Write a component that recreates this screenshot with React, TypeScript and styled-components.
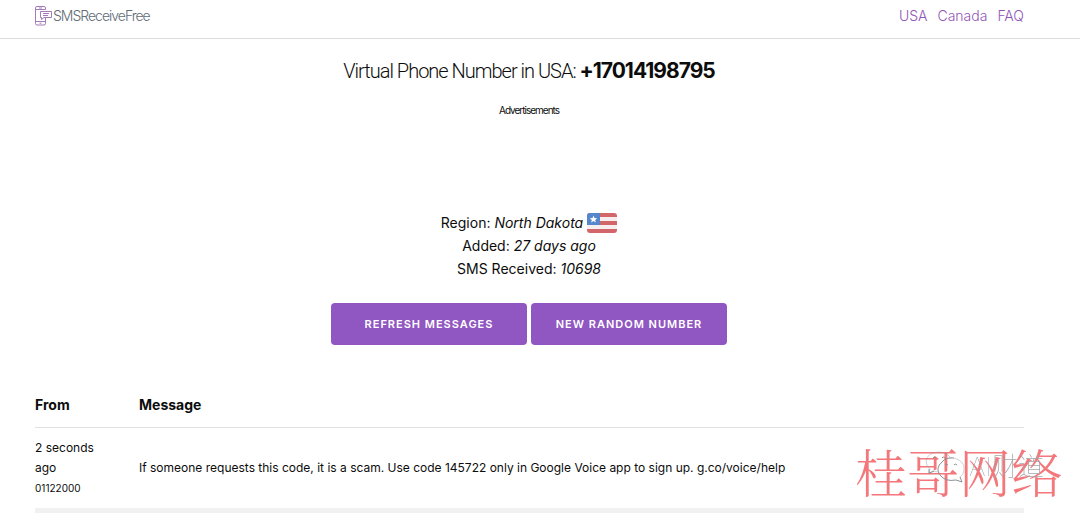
import React from "react";
import styled, { createGlobalStyle } from "styled-components";

const GlobalStyle = createGlobalStyle`
  * { box-sizing: border-box; }
  body {
    margin: 0;
    background: #fff;
    color: #0c0c0c;
    font-family: Inter, "Liberation Sans", sans-serif;
    font-size: 14px;
    font-weight: 400;
    overflow: hidden;
  }
`;

const Header = styled.header`
  display: flex;
  justify-content: space-between;
  align-items: center;
  padding: 4px 56px 11px 35px;
  border-bottom: 1px solid #dcdcdc;
  line-height: 23px;
`;

const Brand = styled.a`
  display: flex;
  align-items: center;
  color: #606c76;
  font-size: 14px;
  font-weight: 300;
  letter-spacing: -1px;
  text-decoration: none;
`;

const Nav = styled.nav`
  display: flex;
  gap: 10px;
`;

const NavLink = styled.a`
  color: #9056b8;
  font-size: 14px;
  font-weight: 300;
  text-decoration: none;
`;

const Main = styled.main`
  padding: 18px 56px 0 35px;
`;

const Summary = styled.section`
  display: flex;
  flex-direction: column;
  align-items: center;
  padding-right: 1px;
  text-align: center;
`;

const Title = styled.h1`
  margin: 0;
  font-family: Roboto, Inter, sans-serif;
  font-size: 20px;
  line-height: 28px;
  font-weight: 300;
  letter-spacing: -1px;
`;

const Strong = styled.strong`
  font-family: Inter, sans-serif;
  font-size: 21px;
  font-weight: 700;
`;

const AdSlot = styled.div`
  height: 126px;
  padding-top: 17px;
  font-size: 10px;
  line-height: 16px;
  letter-spacing: -1px;
`;

const Facts = styled.div`
  font-size: 14px;
  line-height: 23px;
`;

const Fact = styled.div`
  display: flex;
  justify-content: center;
  align-items: center;
  gap: 4px;
`;

const Actions = styled.div`
  display: flex;
  gap: 4px;
  margin-top: 23px;
`;

const Button = styled.button`
  width: 196px;
  height: 42px;
  padding: 0;
  border: 0;
  border-radius: 4px;
  background: #9056c2;
  color: #fff;
  font-family: inherit;
  font-size: 11px;
  font-weight: 600;
  letter-spacing: 1px;
  text-transform: uppercase;
`;

const Table = styled.table`
  width: 100%;
  margin-top: 36px;
  border-collapse: collapse;
  text-align: left;
`;

const HeadCell = styled.th`
  padding: 12px 0 11px;
  border-bottom: 1px solid #e1e1e1;
  font-size: 14px;
  font-weight: 700;
  line-height: 23px;
`;

const FromHead = styled(HeadCell)`
  width: 104px;
`;

const Cell = styled.td`
  padding: 10px 0;
  border-bottom: 6px solid #f1f1f1;
  font-size: 12px;
  line-height: 20px;
  vertical-align: middle;
`;

const FromCell = styled(Cell)`
  padding-right: 36px;
`;

const Sender = styled.div`
  font-size: 10px;
`;

const SiteMark = styled.div`
  position: fixed;
  right: 17px;
  bottom: 6px;
  color: #f3777b;
  font-family: "Noto Serif CJK SC", "Noto Sans CJK SC", serif;
  font-size: 52px;
  font-weight: 300;
  line-height: 72px;
`;

const AccountMark = styled.div`
  position: fixed;
  right: 36px;
  bottom: 28px;
  display: flex;
  align-items: center;
  gap: 4px;
  color: #a3a7ab;
  font-family: Inter, "Noto Sans CJK SC", sans-serif;
  font-size: 26px;
  font-weight: 100;
  line-height: 36px;
`;

function LogoIcon() {
  return (
    <svg width="18" height="20" viewBox="0 0 18 20" fill="none" stroke="#a27bb8" aria-hidden="true">
      <path d="M10.5 3.5V2Q10.5.5 9 .5H2Q.5.5.5 2v15.500Q.5 19 2 19h7q1.500 0 1.500-1.500V12M.5 3.500h10M.5 15.500h10M4 2h3M4.500 17.200h2" />
      <path d="M5.500 5.500h11v6H9l-2.500 2v-2h-1zM8 7.500h6M8 9.500h5" />
    </svg>
  );
}

function Flag() {
  return (
    <svg width="30" height="20" viewBox="0 0 30 20" role="img" aria-label="USA">
      <clipPath id="flag-shape"><rect width="30" height="20" rx="3" /></clipPath>
      <g clipPath="url(#flag-shape)">
        <path fill="#d3666b" d="M0 0h30v20H0z" />
        <path fill="#f6edf0" d="M0 4h30v4H0zM0 12h30v4H0z" />
        <path fill="#5686cc" d="M0 0h13v12H0z" />
        <path fill="#fff" d="m6.500 2.500 1 2.500 2.700.2-2 1.700.6 2.600-2.300-1.400-2.300 1.400.6-2.600-2-1.700 2.700-.2z" />
      </g>
    </svg>
  );
}

function ChatIcon() {
  return (
    <svg width="40" height="34" viewBox="0 0 40 34" fill="none" stroke="#8b8f93" aria-hidden="true">
      <path strokeOpacity=".4" d="M14 22q-3 0-5-1l-5 3 1-5Q1 16 1 11 2 3 13 2q10 0 13 7" />
      <path d="M35 27l2 5-6-2Q20 32 15 25T17 12q4-5 12-4M20 15q1-2 3 0M29 15q1-2 3 0M8 8q1-2 3 0M17 8q1-2 3 0M4 19v4l5-2" />
      <path strokeOpacity=".4" d="M29 8q11 3 10 12 0 4-4 7" />
    </svg>
  );
}

export default function App() {
  return (
    <>
      <GlobalStyle />
      <Header>
        <Brand href="#"><LogoIcon />SMSReceiveFree</Brand>
        <Nav>
          <NavLink href="#usa">USA</NavLink>
          <NavLink href="#canada">Canada</NavLink>
          <NavLink href="#faq">FAQ</NavLink>
        </Nav>
      </Header>
      <Main>
        <Summary>
          <Title>Virtual Phone Number in USA: <Strong>+17014198795</Strong></Title>
          <AdSlot>Advertisements</AdSlot>
          <Facts>
            <Fact><span>Region: <em>North Dakota</em></span><Flag /></Fact>
            <Fact><span>Added: <em>27 days ago</em></span></Fact>
            <Fact><span>SMS Received: <em>10698</em></span></Fact>
          </Facts>
          <Actions>
            <Button type="button">Refresh messages</Button>
            <Button type="button">New random number</Button>
          </Actions>
        </Summary>
        <Table>
          <thead>
            <tr><FromHead scope="col">From</FromHead><HeadCell scope="col">Message</HeadCell></tr>
          </thead>
          <tbody>
            <tr>
              <FromCell>2 seconds ago<Sender>01122000</Sender></FromCell>
              <Cell>If someone requests this code, it is a scam. Use code 145722 only in Google Voice app to sign up. g.co/voice/help</Cell>
            </tr>
          </tbody>
        </Table>
      </Main>
      <SiteMark>桂哥网络</SiteMark>
      <AccountMark><ChatIcon />AI财道</AccountMark>
    </>
  );
}
